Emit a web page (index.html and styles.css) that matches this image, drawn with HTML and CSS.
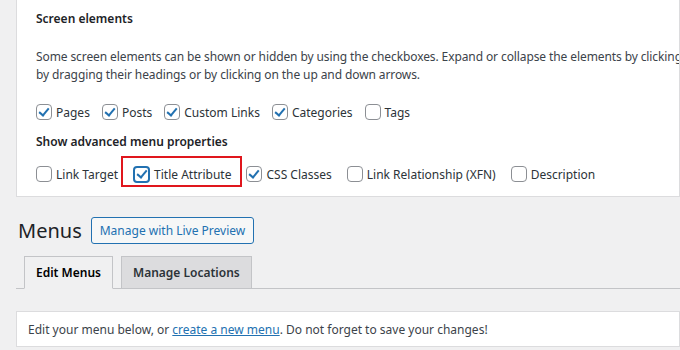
FILE: index.html
```html
<!DOCTYPE html>
<html lang="en">
<head>
   <meta charset="UTF-8">
   <meta name="viewport" content="width=device-width">
   <title>Menus</title>
   <link rel="stylesheet" href="styles.css">
</head>
<body>
   <div class="screen-options">
       <div class="legend">Screen elements</div>
       <p class="intro">Some screen elements can be shown or hidden by using the checkboxes. Expand or collapse the elements by clicking on their headings, and arrange them<br>by dragging their headings or by clicking on the up and down arrows.</p>

       <div class="check-row first">
           <label class="check"><span class="box on"></span>Pages</label>
           <label class="check"><span class="box on"></span>Posts</label>
           <label class="check"><span class="box on"></span>Custom Links</label>
           <label class="check"><span class="box on"></span>Categories</label>
           <label class="check"><span class="box"></span>Tags</label>
       </div>

       <div class="legend advanced">Show advanced menu properties</div>
       <div class="check-row second">
           <label class="check"><span class="box"></span>Link Target</label>
           <label class="check highlight"><span class="box on focus"></span>Title Attribute</label>
           <label class="check"><span class="box on"></span>CSS Classes</label>
           <label class="check"><span class="box"></span>Link Relationship (XFN)</label>
           <label class="check"><span class="box"></span>Description</label>
       </div>
   </div>

   <div class="page-title">
       <h1>Menus</h1>
       <a class="button" href="#">Manage with Live Preview</a>
   </div>

   <div class="tabs">
       <a class="tab active" href="#">Edit Menus</a>
       <a class="tab" href="#">Manage Locations</a>
   </div>

   <div class="notice">
       Edit your menu below, or <a href="#">create a new menu</a>. Do not forget to save your changes!
   </div>
</body>
</html>
```

FILE: styles.css
```css
body {
    margin: 0;
    padding-left: 16px;
    background-color: #f0f0f1;
    color: #3c434a;
    font-family: "Noto Sans", "Open Sans", sans-serif;
    font-size: 12px;
    overflow: hidden;
}
.screen-options {
    background-color: #fff;
    border: 1px solid #dcdcde;
    border-top: none;
    padding: 10px 0 12px 19px;
    white-space: nowrap;
    overflow: hidden;
}
.legend {
    font-weight: 600;
    color: #1d2327;
    line-height: 18px;
}
.intro {
    margin: 20px 0 0;
    line-height: 18px;
    letter-spacing: -0.1px;
}
.check-row {
    display: flex;
    align-items: center;
    height: 20px;
}
.check-row.first {
    margin-top: 18px;
    gap: 12px;
}
.check-row.second {
    margin-top: 13px;
    gap: 15px;
}
.advanced { margin-top: 11px; }
.check {
    display: flex;
    align-items: center;
    gap: 4px;
    height: 20px;
    color: #2c3338;
}
.box {
    width: 16px;
    height: 16px;
    box-sizing: border-box;
    border: 1px solid #8c8f94;
    border-radius: 4px;
    background: #fff;
    position: relative;
}
.box.on::after {
    content: "";
    position: absolute;
    left: 4px;
    top: 1px;
    width: 4px;
    height: 8px;
    border: solid #2271b1;
    border-width: 0 2px 2px 0;
    transform: rotate(40deg);
}
.box.focus {
    border: 2px solid #2271b1;
    width: 17px;
    height: 17px;
}
.box.focus::after { left: 4px; top: 0; }
.highlight { position: relative; }
.highlight::after {
    content: "";
    position: absolute;
    left: -12px;
    right: -11px;
    top: -8px;
    bottom: -3px;
    border: 2px solid #e0161d;
}
.page-title {
    display: flex;
    align-items: center;
    gap: 9px;
    margin-top: 20px;
    padding-left: 2px;
}
h1 {
    margin: 0;
    font-size: 20px;
    line-height: 27px;
    font-weight: 400;
    color: #1d2327;
}
.button {
    display: block;
    height: 27px;
    line-height: 25px;
    box-sizing: border-box;
    padding: 0 8px;
    border: 1px solid #2271b1;
    border-radius: 3px;
    background-color: #f6f7f7;
    color: #2271b1;
    text-decoration: none;
}
.tabs {
    display: flex;
    gap: 8px;
    margin-top: 12px;
    padding-left: 8px;
    border-bottom: 1px solid #c3c4c7;
}
.tab {
    display: block;
    height: 33px;
    line-height: 31px;
    box-sizing: border-box;
    padding: 0 11px;
    margin-bottom: -1px;
    border: 1px solid #c3c4c7;
    background-color: #dcdcde;
    color: #2c3338;
    font-size: 12px;
    font-weight: 600;
    text-decoration: none;
}
.tab.active {
    background-color: #f0f0f1;
    border-bottom-color: #f0f0f1;
    color: #000;
}
.notice {
    margin-top: 22px;
    height: 36px;
    line-height: 35px;
    box-sizing: border-box;
    padding-left: 11px;
    background-color: #fff;
    border: 1px solid #dcdcde;
    color: #3c434a;
}
.notice a { color: #2271b1; }
```
